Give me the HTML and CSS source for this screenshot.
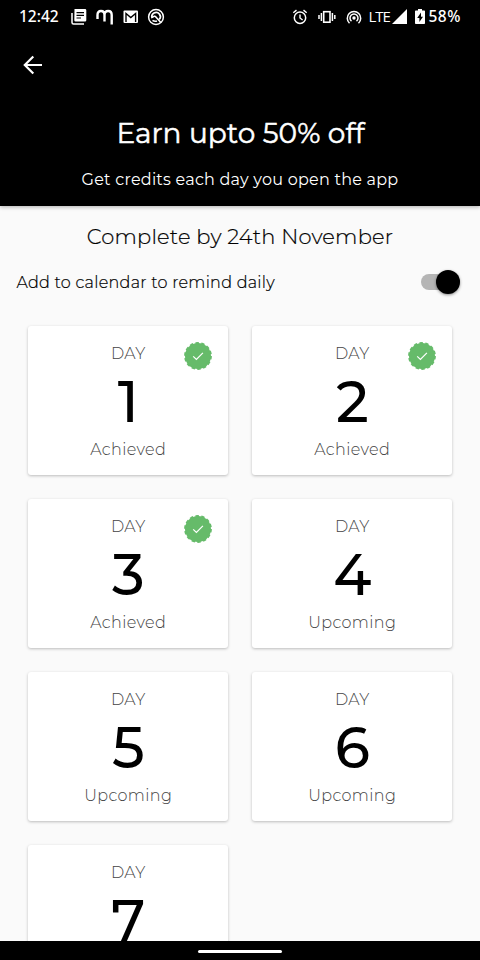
FILE: index.html
```html
<!DOCTYPE html>
<html lang="en">
<head>
<meta charset="utf-8">
<title>Daily rewards</title>
<link rel="stylesheet" href="styles.css">
</head>
<body>
<div class="screen">
  <header class="header">
    <div class="status">
      <span class="clock">12:42</span>
      <svg class="ic news" viewBox="0 0 16 16"><path d="M1 4v9.500q0 1.500 1.500 1.500H13" fill="none" stroke="#fff" stroke-width="1.500"/><path fill="#fff" fill-rule="evenodd" d="M3.500 0H14q1.300 0 1.300 1.300v10q0 1.200-1.300 1.200H4.500q-1.200 0-1.200-1.200zM5.500 3v1.200h7.500V3zm0 2.700v1.200h7.500V5.700zm0 2.700v1.200h4.500V8.400z"/></svg>
      <svg class="ic em" viewBox="0 0 18 16"><path d="M1.500 10V6q0-4 3.500-4t3.500 4V12.500M8.500 6q0-4 3.600-4t3.600 4V15.500" fill="none" stroke="#fff" stroke-width="2.400"/></svg>
      <svg class="ic mail" viewBox="0 0 16 14"><rect x=".5" y=".5" width="14.500" height="12.500" rx="1" fill="#fff"/><path d="M3 12V3.500l4.800 4 4.800-4V12" fill="none" stroke="#000" stroke-width="1.400"/></svg>
      <svg class="ic ring" viewBox="0 0 18 18"><circle cx="9" cy="9" r="7.400" fill="none" stroke="#fff" stroke-width="1.500"/><path d="M5.200 10.200A4.200 4.200 0 1 1 12.200 11.500" fill="none" stroke="#fff" stroke-width="1.800"/><path d="M8 8l5.800 6.500M4.500 9.500l3.500-1.500M5.500 12.300q2 1.500 4.500.7" fill="none" stroke="#fff" stroke-width="1.600"/></svg>
      <span class="grow"></span>
      <svg class="ic alarm" viewBox="0 0 16 16"><circle cx="8" cy="8.800" r="5.700" fill="none" stroke="#fff" stroke-width="1.500"/><path d="M1.300 3.800l3.200-2.700M14.700 3.800l-3.200-2.700M8 5.500V9l2.600 2" fill="none" stroke="#fff" stroke-width="1.400"/></svg>
      <svg class="ic vib" viewBox="0 0 18 14"><rect x="5.700" y="1.700" width="6.300" height="10.500" fill="none" stroke="#fff" stroke-width="1.600"/><path d="M3.400 3v8M1 5v4M14.400 3v8M16.800 5v4" stroke="#fff" stroke-width="1.500"/></svg>
      <svg class="ic cast" viewBox="0 0 16 14"><circle cx="8" cy="8" r="1.700" fill="#fff"/><path d="M5.500 11.200a4 4 0 1 1 5 0M3.500 13.200a6.700 6.700 0 1 1 9 0" fill="none" stroke="#fff" stroke-width="1.500"/></svg>
      <span class="lte">LTE</span>
      <svg class="ic signal" viewBox="0 0 15 15"><path d="M15 0v15H0z" fill="#fff"/></svg>
      <svg class="ic battery" viewBox="0 0 10 15"><path fill="#fff" fill-rule="evenodd" d="M3 0h4v1.500h2.200q.8 0 .8.800v12q0 .7-.8.700H.8Q0 15 0 14.300v-12q0-.8.800-.8H3zM6 3.500L2.200 9h2.200v4L8 7.700H6z"/></svg>
      <span class="pct">58%</span>
    </div>
    <svg class="back" viewBox="0 0 20 20"><path d="M19 10H2M10.300 1.500L1.800 10l8.500 8.500" fill="none" stroke="#fff" stroke-width="2.200"/></svg>
    <h1 class="title">Earn upto 50% off</h1>
    <p class="sub">Get credits each day you open the app</p>
  </header>
  <main class="content">
    <h2 class="deadline">Complete by 24th November</h2>
    <div class="remind"><span class="remind-text">Add to calendar to remind daily</span><span class="switch"><i class="knob"></i></span></div>
    <section class="grid">
      <article class="card"><p class="label">DAY</p><p class="num">1</p><p class="state">Achieved</p><svg class="badge" viewBox="-14 -14 28 28"><use href="#seal"/></svg></article>
      <article class="card"><p class="label">DAY</p><p class="num">2</p><p class="state">Achieved</p><svg class="badge" viewBox="-14 -14 28 28"><use href="#seal"/></svg></article>
      <article class="card"><p class="label">DAY</p><p class="num">3</p><p class="state">Achieved</p><svg class="badge" viewBox="-14 -14 28 28"><use href="#seal"/></svg></article>
      <article class="card"><p class="label">DAY</p><p class="num">4</p><p class="state">Upcoming</p></article>
      <article class="card"><p class="label">DAY</p><p class="num">5</p><p class="state">Upcoming</p></article>
      <article class="card"><p class="label">DAY</p><p class="num">6</p><p class="state">Upcoming</p></article>
      <article class="card"><p class="label">DAY</p><p class="num">7</p></article>
    </section>
  </main>
  <footer class="nav"><i class="pill"></i></footer>
</div>
<svg class="defs"><defs><g id="seal"><circle r="13" fill="#66bb6a"/><circle r="12.800" fill="none" stroke="#66bb6a" stroke-width="2.200" stroke-dasharray="3.400 2.345"/><path d="M-4.800.3l3.200 3.200L4.900-3.200" fill="none" stroke="#fff" stroke-width="1.200"/></g></defs></svg>
</body>
</html>
```
FILE: styles.css
```css
* { box-sizing: border-box; }
body { margin: 0; background: #fafafa; font-family: Montserrat, Inter, sans-serif; }
h1, h2, p { margin: 0; }
.screen { width: 480px; height: 960px; display: flex; flex-direction: column; overflow: hidden; }
.header { height: 205.500px; flex: none; background: #000; color: #fff; box-shadow: 0 1px 4px rgba(0,0,0,.3); text-align: center; }
.status { height: 33px; display: flex; align-items: center; padding: 0 18.500px 0 19px; }
.clock { width: 51.500px; font: 500 15.500px/33px "Noto Sans", sans-serif; text-align: left; white-space: nowrap; }
.grow { flex: 1; }
.ic { flex: none; }
.news { width: 16px; height: 16px; }
.em { width: 18px; height: 16px; margin-left: 9px; }
.mail { width: 16px; height: 14px; margin-left: 9px; }
.ring { width: 18px; height: 18px; margin-left: 8px; }
.alarm { width: 16px; height: 16px; }
.vib { width: 18px; height: 14px; margin-left: 10px; }
.cast { width: 16px; height: 14px; margin-left: 10px; }
.lte { width: 20px; font: 400 15px/33px "Open Sans", sans-serif; letter-spacing: -1.100px; margin-left: 7px; white-space: nowrap; }
.signal { width: 15px; height: 15px; margin-left: 3px; }
.battery { width: 10px; height: 15px; margin-left: 8px; }
.pct { width: 33px; font: 500 15.500px/33px "Noto Sans", sans-serif; margin-left: 4px; white-space: nowrap; text-align: left; letter-spacing: .5px; }
.back { display: block; width: 20px; height: 20px; margin: 22px 0 0 23px; }
.title { font-size: 28px; font-weight: 400; line-height: 36px; margin-top: 40px; padding-left: 1px; letter-spacing: .05px; -webkit-text-stroke: .5px #fff; }
.sub { font-size: 16px; font-weight: 400; line-height: 20px; margin-top: 19px; letter-spacing: .24px; }
.content { height: 735.500px; flex: none; overflow: hidden; padding-top: 17.500px; }
.deadline { font-size: 21px; font-weight: 300; line-height: 28px; text-align: center; letter-spacing: .2px; -webkit-text-stroke: .2px #000; }
.remind { display: flex; justify-content: space-between; align-items: center; height: 30px; margin: 16px 20px 0 16.500px; font-size: 16px; font-weight: 300; letter-spacing: .28px; }
.remind-text { white-space: nowrap; padding-top: 1px; -webkit-text-stroke: .2px #000; }
.switch { width: 39px; height: 16px; border-radius: 8px; background: #b5b5b5; display: flex; align-items: center; justify-content: flex-end; }
.knob { width: 24px; height: 24px; border-radius: 50%; background: #000; box-shadow: 0 1px 3px rgba(0,0,0,.45); flex: none; }
.grid { display: grid; grid-template-columns: 200px 200px; gap: 23.500px 24px; grid-auto-rows: 149.500px; margin: 28.600px 0 0 28px; }
.card { position: relative; background: #fff; border-radius: 3px; box-shadow: 0 1px 3px rgba(0,0,0,.25); text-align: center; padding: 18px 0 0 .5px; }
.label { font-size: 16px; font-weight: 300; line-height: 20px; color: #444; letter-spacing: .3px; }
.num { font-size: 57px; font-weight: 500; line-height: 60px; margin-top: 8.400px; }
.state { font-size: 16px; font-weight: 300; line-height: 20px; margin-top: 8px; color: #444; letter-spacing: .4px; }
.badge { position: absolute; left: 156px; top: 16px; width: 28px; height: 28px; }
.nav { height: 19px; flex: none; background: #000; display: flex; align-items: center; justify-content: center; }
.pill { width: 84px; height: 3px; border-radius: 2px; background: #fff; margin-top: 2px; }
.defs { position: absolute; width: 0; height: 0; }
```
